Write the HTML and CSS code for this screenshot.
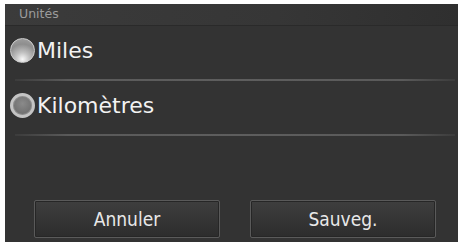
FILE: index.html
```html
<!DOCTYPE html>
<html>
<head>
<meta charset="utf-8">
<link rel="stylesheet" href="styles.css">
</head>
<body>
<div class="screen">
  <div class="header">Unités</div>
  <div class="row">
    <span class="radio radio-on"></span><span class="label">Miles</span>
  </div>
  <div class="sep"></div>
  <div class="row">
    <span class="radio radio-off"></span><span class="label">Kilomètres</span>
  </div>
  <div class="sep"></div>
  <div class="spacer"></div>
  <div class="buttons">
    <div class="btn">Annuler</div>
    <div class="btn">Sauveg.</div>
  </div>
</div>
</body>
</html>
```
FILE: styles.css
```css
html, body {
  margin: 0;
  padding: 0;
  background: #ffffff;
}
body {
  width: 465px;
  height: 242px;
  overflow: hidden;
  font-family: "DejaVu Sans", sans-serif;
}
.screen {
  margin: 4px 7px 0 5px;
  height: 238px;
  background: #333333;
  display: flex;
  flex-direction: column;
}
.header {
  height: 21px;
  background: linear-gradient(to right, #3b3b3b 0%, #363636 60%, #2f2f2f 100%);
  color: #9c9c9c;
  font-size: 12.5px;
  line-height: 20px;
  padding-left: 14px;
  border-bottom: 1px solid #2a2a2a;
}
.row {
  height: 53px;
  box-sizing: border-box;
  padding: 0 0 4px 5px;
  display: flex;
  align-items: center;
}
.radio {
  width: 25px;
  height: 25px;
  border-radius: 50%;
  box-sizing: border-box;
  flex: none;
}
.radio-on {
  background: radial-gradient(circle at 50% 88%, #f8f8f8 0%, #c0c0c0 30%, #8e8e8e 65%, #a4a4a4 100%);
  border: 1px solid #cfcfcf;
}
.radio-off {
  border: 3px solid #c4c4c4;
  background: radial-gradient(circle at 50% 40%, #8a8a8a 0%, #747474 60%, #6a6a6a 100%);
  box-shadow: inset 0 0 0 1px #8c8c8c;
}
.label {
  color: #f2f2f2;
  font-size: 22px;
  margin-left: 2px;
}
.sep {
  height: 2px;
  margin: 0 3px 0 10px;
  background: linear-gradient(to right, #3c3c3c 0%, #5a5a5a 12%, #5e5e5e 50%, #5a5a5a 88%, #3c3c3c 100%);
}
.spacer {
  flex: 1;
}
.buttons {
  display: flex;
  gap: 30px;
  padding-left: 29px;
  margin-bottom: 4px;
}
.btn {
  width: 186px;
  height: 38px;
  box-sizing: border-box;
  border: 1px solid #5a5a5a;
  border-radius: 2px;
  background: linear-gradient(to bottom, #3e3e3e 0%, #353535 50%, #2c2c2c 100%);
  box-shadow: inset 0 0 0 1px #262626;
  color: #e8e8e8;
  font-family: "DejaVu Sans Condensed", "DejaVu Sans", sans-serif;
  font-stretch: condensed;
  font-size: 19px;
  display: flex;
  align-items: center;
  justify-content: center;
}
```
